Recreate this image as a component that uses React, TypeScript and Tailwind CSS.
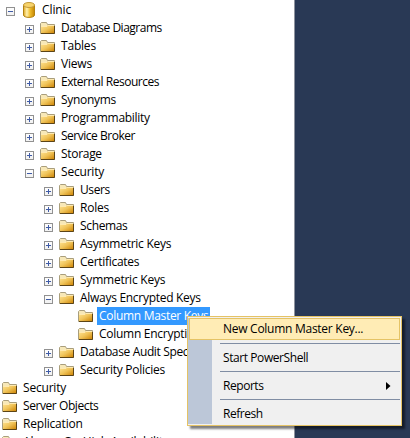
import { Fragment } from "react";

type Node = { label: string; level: number; state?: "open" | "closed"; db?: boolean; selected?: boolean; tracking?: string };

const nodes: Node[] = [
  { label: "Clinic", level: 1, state: "open", db: true, tracking: "tracking-[-0.1px]" },
  { label: "Database Diagrams", level: 2, state: "closed", tracking: "tracking-[-0.5px]" },
  { label: "Tables", level: 2, state: "closed" },
  { label: "Views", level: 2, state: "closed" },
  { label: "External Resources", level: 2, state: "closed", tracking: "tracking-[-0.48px]" },
  { label: "Synonyms", level: 2, state: "closed", tracking: "tracking-[-0.3px]" },
  { label: "Programmability", level: 2, state: "closed", tracking: "tracking-[-0.28px]" },
  { label: "Service Broker", level: 2, state: "closed", tracking: "tracking-[-0.48px]" },
  { label: "Storage", level: 2, state: "closed", tracking: "tracking-[-0.3px]" },
  { label: "Security", level: 2, state: "open" },
  { label: "Users", level: 3, state: "closed", tracking: "tracking-[-0.4px]" },
  { label: "Roles", level: 3, state: "closed" },
  { label: "Schemas", level: 3, state: "closed", tracking: "tracking-[-0.35px]" },
  { label: "Asymmetric Keys", level: 3, state: "closed", tracking: "tracking-[-0.27px]" },
  { label: "Certificates", level: 3, state: "closed", tracking: "tracking-[-0.3px]" },
  { label: "Symmetric Keys", level: 3, state: "closed", tracking: "tracking-[-0.23px]" },
  { label: "Always Encrypted Keys", level: 3, state: "open", tracking: "tracking-[-0.29px]" },
  { label: "Column Master Keys", level: 4, selected: true, tracking: "tracking-[-0.3px]" },
  { label: "Column Encryption Keys", level: 4, tracking: "tracking-[-0.27px]" },
  { label: "Database Audit Specifications", level: 3, state: "closed", tracking: "tracking-[-0.36px]" },
  { label: "Security Policies", level: 3, state: "closed", tracking: "tracking-[-0.27px]" },
  { label: "Security", level: 0 },
  { label: "Server Objects", level: 0, tracking: "tracking-[-0.42px]" },
  { label: "Replication", level: 0 },
  { label: "Always On High Availability", level: 0, tracking: "tracking-[-0.15px]" },
];

const indent = ["pl-[2px]", "pl-[6px]", "pl-[25px]", "pl-[44px]", "pl-[78px]"];

const menu = [
  { label: "New Column Master Key...", tracking: "tracking-[-0.27px]" },
  { label: "Start PowerShell", tracking: "tracking-[-0.42px]" },
  { label: "Reports", tracking: "tracking-[-0.45px]" },
  { label: "Refresh", tracking: "tracking-[-0.45px]" },
];

function Expander({ open }: { open: boolean }) {
  return (
    <svg width="9" height="9" viewBox="0 0 9 9" shapeRendering="crispEdges" className="mt-[6px] mr-[6px] shrink-0">
      <rect x="0.5" y="0.5" width="8" height="8" fill="#f3f3f3" stroke="#919191" />
      <rect x="1" y="1" width="7" height="3" fill="#fcfcfc" />
      <rect x="2" y="4" width="5" height="1" fill="#3f5ba6" />
      {!open && <rect x="4" y="2" width="1" height="5" fill="#3f5ba6" />}
    </svg>
  );
}

function Folder() {
  return (
    <svg width="16" height="13" viewBox="0 0 16 13" className="mt-[3px] shrink-0">
      <path d="M0.5 11.5V1.5L1.5 0.5H6.5L7.5 2.5H14.5V11.5Z" fill="#f7e8b8" stroke="#a99e7c" />
      <path d="M1 11V4H7L8 3H14V11Z" fill="url(#folderFill)" />
      <path d="M1 4.5H7L8 3.5H14" fill="none" stroke="#ffeab0" />
      <path d="M1 11.5H14.5V4" fill="none" stroke="#5c4416" />
    </svg>
  );
}

function Database() {
  return (
    <svg width="12" height="16" viewBox="0 0 12 16" className="mt-[1px] shrink-0">
      <path d="M0.5 3V13C0.5 16.2 11.5 16.2 11.5 13V3" fill="url(#dbFill)" stroke="#b38211" />
      <ellipse cx="6" cy="3" rx="5.5" ry="2.5" fill="#f7d36a" stroke="#c39a3c" />
    </svg>
  );
}

export default function App() {
  return (
    <div className="relative flex h-[438px] w-[410px] overflow-hidden bg-[#293955] font-['Open_Sans','Noto_Sans',sans-serif] text-[12px] leading-[18px] text-black">
      <svg width="0" height="0" className="absolute">
        <defs>
          <linearGradient id="folderFill" x1="0" y1="0" x2="1" y2="1">
            <stop offset="0" stopColor="#ffe596" />
            <stop offset="0.5" stopColor="#f0c45a" />
            <stop offset="1" stopColor="#cf8708" />
          </linearGradient>
          <linearGradient id="dbFill">
            <stop offset="0" stopColor="#dda51c" />
            <stop offset="0.3" stopColor="#fff0ae" />
            <stop offset="0.6" stopColor="#f0bd2c" />
            <stop offset="1" stopColor="#c48503" />
          </linearGradient>
        </defs>
      </svg>
      <div className="w-[295px] shrink-0 overflow-hidden border-r border-[#8e939e] bg-white pt-px">
        {nodes.map((n, i) => (
          <div key={i} className={`flex h-[18px] items-start whitespace-nowrap ${indent[n.level]}`}>
            {n.state && <Expander open={n.state === "open"} />}
            {n.db ? <span className="flex w-4 shrink-0 justify-center"><Database /></span> : <Folder />}
            <span className={`ml-[3px] h-[18px] pl-[2px] ${n.tracking ?? "tracking-[-0.2px]"} ${n.selected ? "w-[113px] bg-[#3399ff] text-white" : ""}`}>
              {n.label}
            </span>
          </div>
        ))}
      </div>
      <div className="absolute top-[316px] left-[187px] flex h-[110px] w-[215px] border border-[#e5c365] bg-[#f0f0f0] shadow-[3px_3px_2px_rgba(0,0,0,0.5)]">
        <div className="mt-px mb-px w-[24px] bg-[#bcc7d8]" />
        <div className="absolute inset-x-px top-px h-[22px] border border-[#e5c365] bg-[#ffecb5]" />
        <div className="relative flex flex-1 flex-col pt-px pr-px">
          {menu.map((m, i) => (
            <Fragment key={m.label}>
              {i > 0 && <div className="my-[3px] ml-[8px] h-px shrink-0 bg-[#808da3]" />}
              <div className={`flex shrink-0 items-center justify-between pr-[9px] pl-[11px] ${m.tracking} ${i === 0 ? "h-[22px]" : "h-[21px]"}`}>
                {m.label}
                {m.label === "Reports" && (
                  <svg width="5" height="8" viewBox="0 0 5 8"><path d="M0 0L4.5 4L0 8Z" fill="black" /></svg>
                )}
              </div>
            </Fragment>
          ))}
        </div>
      </div>
    </div>
  );
}
